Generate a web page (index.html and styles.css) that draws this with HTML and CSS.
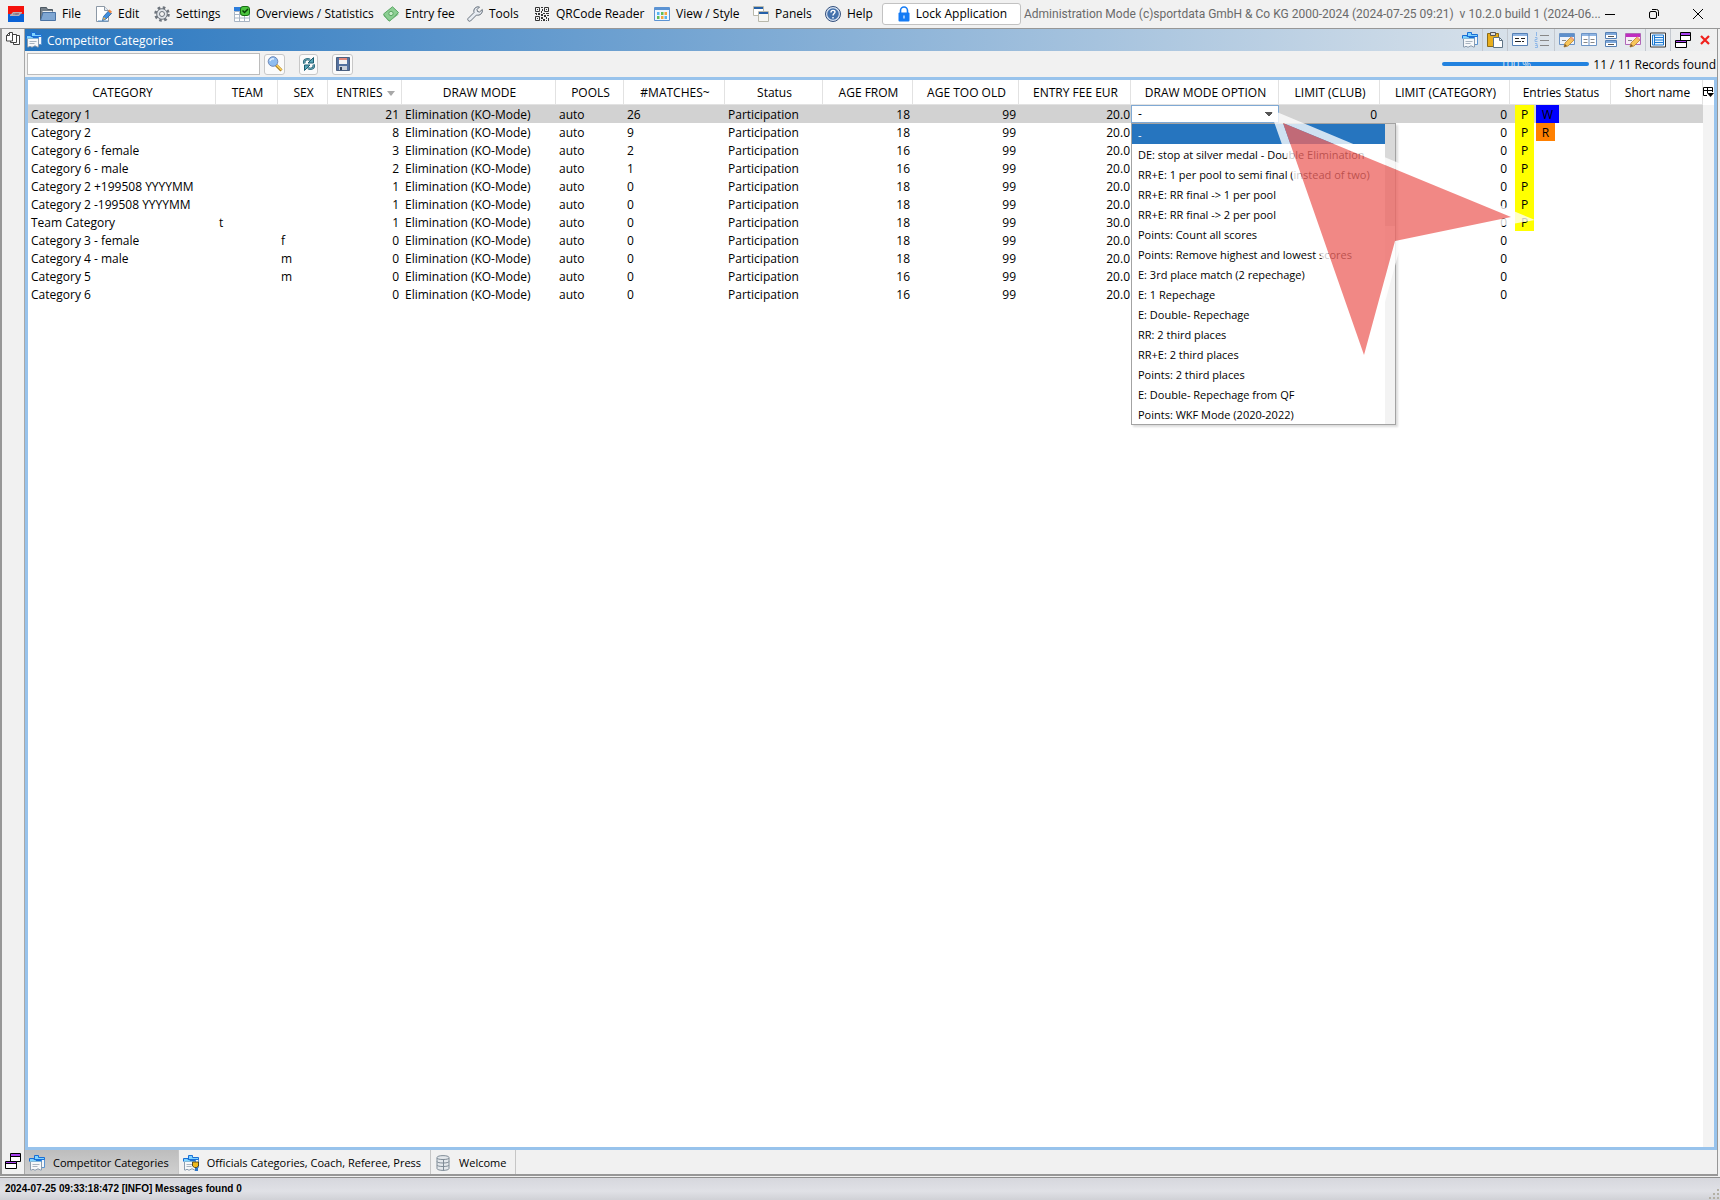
FILE: index.html
```html
<!DOCTYPE html>
<html lang="en">
<head>
<meta charset="utf-8">
<title>Competitor Categories</title>
<link rel="stylesheet" href="styles.css">
</head>
<body>
<svg class="sprite" aria-hidden="true">
  <symbol id="i-cards" viewBox="0 0 16 16"><path d="M5.500 3.500h10v9h-10z" fill="#f3f7fb" stroke="#5b93cf"/><path d="M5.500.5h4v2h6v2h-10z" fill="#7fd4ff" stroke="#1a6fd6"/><path d="M1.500 6.500h11V15H11l-1-1H8l-1 1H5l-1-1-1 1H1.500z" fill="#f6f8fa" stroke="#8b9cae"/><path d="M.5 6.500v-3H5v1h2v1h5.500v1" fill="#7fd4ff" stroke="#1a6fd6"/><path d="M3.500 9.500h7m-7 2h5" stroke="#a9b4c0"/></symbol>
  <symbol id="i-windows" viewBox="0 0 16 16"><path d="M5.500.5h10v8h-10z" fill="#fff" stroke="#000"/><path d="M6 1h9v2H6z" fill="#a63ff0"/><path d="M6 3.500h9" stroke="#000"/><path d="M.5 8.500h11v7H.5z" fill="#fff" stroke="#000"/><path d="M1 9h10v1H1z" fill="#a63ff0"/><path d="M1 10.500h10" stroke="#000"/></symbol>
  <symbol id="i-pencil" viewBox="0 0 16 16"><path d="M5 15l1-4 6-6 3 3-6 6z" fill="#f7c65a" stroke="#b9812c" stroke-width=".8"/><path d="M5 15l1-3 2 2z" fill="#7a5a30"/><path d="M11 6l1.500-1.500 2.500 2.500L13.500 8.500z" fill="#f2a27c"/></symbol>
</svg>

<header class="menubar">
  <svg class="logo" viewBox="0 0 16 16"><path fill="#f5120c" d="M0 0h16v8H0z"/><path fill="#0a62d6" d="M0 8h16v8H0z"/><path d="M2 9.500L5 6h9v1.500H7.500L7 9zM14 6.500L11 10H2V8.500h7z" fill="#b9aeb6"/><path d="M5 8h6" stroke="#777c88"/></svg>
  <nav class="menus" aria-label="Main menu">
    <button class="menu"><svg class="icon" viewBox="0 0 16 16"><path d="M.5 14V1.500h6l1 2h5V6" fill="#75808a" stroke="#4d5963"/><path d="M2.500 5.500h10" stroke="#e9edf0"/><path d="M.5 14.500L3 6.500h12.500v8z" fill="#7fa6d2" stroke="#4a73a4"/></svg>File</button>
    <button class="menu"><svg class="icon" viewBox="0 0 16 16"><path d="M.5.5h8l4 4v11H.5z" fill="#fff" stroke="#8d99a6"/><path d="M8.500.5v4h4" fill="#e3e9f0" stroke="#8d99a6"/><path d="M2 15h10" stroke="#5b93c9"/><path d="M6.500 14.500l1-4 5-5.500 3 2.500-5.500 5.500z" fill="#3f8fe0" stroke="#2b5f99" stroke-width=".8"/><path d="M7 14l.8-3 2 1.800z" fill="#f6b84c"/><path d="M12 5l1.500-1.500 2.500 2.300L14.500 7.500z" fill="#ef8640"/></svg>Edit</button>
    <button class="menu"><svg class="icon" viewBox="0 0 16 16"><circle cx="8" cy="8" r="6.500" fill="none" stroke="#6d747c" stroke-width="2.600" stroke-dasharray="2.600 2.500"/><circle cx="8" cy="8" r="5.300" fill="#dfe3e8" stroke="#6d747c"/><circle cx="8" cy="8" r="2.500" fill="#f2f2f2" stroke="#6d747c"/></svg>Settings</button>
    <button class="menu"><svg class="icon" viewBox="0 0 16 16"><path d="M0 1h8v4H0z" fill="#2b7ddc"/><path d="M.5 5.500h15v10H.5z" fill="#fff" stroke="#a8b5c4"/><path d="M1 8.500h14M1 12h14M5.500 5v10M10.500 5v10" stroke="#a8b5c4"/><rect x="6.500" y=".5" width="9" height="9" rx="2.500" fill="#4cc43e" stroke="#176e12"/><path d="M8.500 4.500l2 2 3.500-3.500" fill="none" stroke="#083f06" stroke-width="1.500"/></svg>Overviews / Statistics</button>
    <button class="menu"><svg class="icon" viewBox="0 0 16 16"><path d="M.5 8L9.500.8 15.500 6.500 7 14.800l-2-.5z" fill="#8ccf93" stroke="#5ba564"/><path d="M.5 9.500l6 5.500L15.500 8" fill="none" stroke="#6eb577"/><circle cx="8" cy="7.500" r="2.200" fill="#c9ecca" stroke="#5ba564"/></svg>Entry fee</button>
    <button class="menu"><svg class="icon" viewBox="0 0 16 16"><path d="M1 12.500l6-6C6 3 9 0 12.500 1L10 3.500l.5 2 2 .5L15.300 3.500C16 7 13 10 9.500 9l-6 6c-1.500 1-3.500-1-2.500-2.500z" fill="#e8ecf2" stroke="#66707c"/></svg>Tools</button>
    <button class="menu"><svg class="icon" viewBox="0 0 16 16"><g fill="none" stroke="#333"><path d="M1.500 1.500h4v4h-4zM10.500 1.500h4v4h-4zM1.500 10.500h4v4h-4z"/></g><path d="M3 3h1v1H3zM12 3h1v1h-1zM3 12h1v1H3zM7 1h2v1H7zM8 3h1v2H8zM7 5h1v2H7zM1 7h2v1H1zM4 7h2v2H4zM9 7h2v1H9zM12 7h3v1h-3zM2 8h1v1H2zM7 8h2v2H7zM10 9h2v2h-2zM13 9h2v1h-2zM7 11h2v2H7zM12 11h1v2h-1zM14 12h1v3h-1zM9 13h2v2H9zM7 14h1v1H7zM12 14h1v1h-1z" fill="#333"/></svg>QRCode Reader</button>
    <button class="menu"><svg class="icon" viewBox="0 0 16 16"><path d="M.5 1.500h15v13H.5z" fill="#eef6ff" stroke="#5b93d3"/><path d="M1 2h14v2H1z" fill="#5b93d3"/><path d="M3 6h2.500v3H3zM10.500 10h2.500v3h-2.500z" fill="#57b5ef"/><path d="M7 6h2.500v3H7zM3 10h2.500v3H3z" fill="#64bd55"/><path d="M10.500 6H13v3h-2.500zM7 10h2.500v3H7z" fill="#f4a540"/></svg>View / Style</button>
    <button class="menu"><svg class="icon" viewBox="0 0 16 16"><path d="M.5.5h10v9H.5z" fill="#fff" stroke="#b9b9ac"/><path d="M1 1h9v2H1z" fill="#2460a8"/><path d="M5.500 5.500h10v10h-10z" fill="#f6f6f2" stroke="#b9b9ac"/><path d="M6 6h9v2H6z" fill="#2460a8"/></svg>Panels</button>
    <button class="menu"><svg class="icon" viewBox="0 0 16 16"><circle cx="8" cy="8" r="7.500" fill="#d7e2f2" stroke="#33507d"/><circle cx="8" cy="8" r="5.800" fill="#4472ad"/><path d="M6 6.500c0-3 4-2.500 4-.5C10 7.500 8 7.500 8 9.500M8 11v1.500" fill="none" stroke="#fff" stroke-width="1.400"/></svg>Help</button>
  </nav>
  <button class="lock"><svg class="icon" viewBox="0 0 16 16"><path d="M4.500 7V4.500a3.500 3.500 0 0 1 7 0V7" fill="none" stroke="#147bf5" stroke-width="1.600"/><rect x="2.500" y="6.500" width="11" height="9" rx="1" fill="#147bf5"/><path d="M8 9.500v3" stroke="#cfe4ff" stroke-width="1.400"/></svg>Lock Application</button>
  <span class="about">Administration Mode (c)sportdata GmbH &amp; Co KG 2000-2024 (2024-07-25 09:21)&nbsp; v 10.2.0 build 1 (2024-06...</span>
  <div class="window-buttons">
    <button aria-label="Minimize"><svg viewBox="0 0 12 12"><path d="M1 6.500h10"/></svg></button>
    <button aria-label="Restore"><svg viewBox="0 0 12 12"><rect x="1.500" y="3.500" width="7" height="7" rx="1.500"/><path d="M4 1.500h4.500a2 2 0 0 1 2 2V8"/></svg></button>
    <button aria-label="Close"><svg viewBox="0 0 12 12"><path d="M1 1l10 10M11 1L1 11"/></svg></button>
  </div>
</header>

<main class="workspace">
  <aside class="gutter">
    <button aria-label="Documents"><svg class="icon" viewBox="0 0 16 16"><g fill="#fff" stroke="#444"><path d="M8.500 4.500h6v9h-6z"/><path d="M5.500 3.500h6v8h-6z"/><path d="M1.500 4.500l3-3h3v8.500h-6z"/><path d="M4.500 1.500v3h-3" fill="none"/></g></svg></button>
    <button aria-label="Windows"><svg class="icon"><use href="#i-windows"/></svg></button>
  </aside>

  <section class="pane">
    <div class="titlebar">
      <svg class="icon"><use href="#i-cards"/></svg>
      <h1>Competitor Categories</h1>
      <div class="tools">
        <span class="group"><button aria-label="Categories"><svg class="icon"><use href="#i-cards"/></svg></button></span>
        <span class="group"><button aria-label="Paste"><svg class="icon" viewBox="0 0 16 16"><path d="M.5 1.500h11v13H.5z" fill="#e8ae1c" stroke="#8a6a1a"/><path d="M3.500.5h5v3h-5z" fill="#ddd" stroke="#555"/><path d="M6.500 5.500h6l3 3v7h-9z" fill="#fff" stroke="#5e7486"/><path d="M12.500 5.500v3h3" fill="none" stroke="#5e7486"/></svg></button></span>
        <span class="group"><button aria-label="Form"><svg class="icon" viewBox="0 0 16 16"><path d="M.5 1.500h15v12H.5z" fill="#fff" stroke="#5580b5"/><path d="M1 2h14v2H1z" fill="#8fb5e3"/><path d="M3 6.500h4M9 6.500h4M3 9.500h6M10 9.500h2" stroke="#222"/></svg></button><button aria-label="Numbering"><svg class="icon" viewBox="0 0 16 16"><path d="M6 3.500h9M6 8.500h9M6 13.500h9" stroke="#888"/><path d="M2.500 0v4M1 5.500h2v2H1v2h2.500M1 11.500h2v2H1.500h2v2H1" fill="none" stroke="#8fb8e8"/></svg></button></span>
        <span class="group"><button aria-label="Edit view"><svg class="icon" viewBox="0 0 16 16"><path d="M.5 1.500h15v11H.5z" fill="#eef3fa" stroke="#6c94c6"/><path d="M1 2h14v3H1z" fill="#5d8fcb"/><path d="M3 8.500h4" stroke="#888"/><use href="#i-pencil" width="16" height="16"/></svg></button><button aria-label="Columns"><svg class="icon" viewBox="0 0 16 16"><path d="M.5 1.500h15v12H.5z" fill="#fff" stroke="#6c94c6"/><path d="M1 2h14v2H1z" fill="#8fb5e3"/><path d="M8 2v12" stroke="#6c94c6"/><path d="M2.500 7.500h4M9.500 7.500h4M2.500 10.500h4M9.500 10.500h4" stroke="#888"/></svg></button><button aria-label="Rows"><svg class="icon" viewBox="0 0 16 16"><path d="M2.500.5h11v6h-11zM2.500 8.500h11v6h-11z" fill="#fff" stroke="#5580b5"/><path d="M3 1h10v2H3zM3 9h10v2H3z" fill="#7ea8da"/><path d="M5 4.500h6M5 12.500h6" stroke="#555"/></svg></button><button aria-label="Edit style"><svg class="icon" viewBox="0 0 16 16"><path d="M.5 1.500h15v11H.5z" fill="#f7ecf7" stroke="#b067b8"/><path d="M1 2h14v3H1z" fill="#c02cc0"/><path d="M3 8.500h4" stroke="#888"/><use href="#i-pencil" width="16" height="16"/></svg></button></span>
        <span class="group"><button aria-label="Table"><svg class="icon" viewBox="0 0 16 16"><path d="M.5 1h15v14H.5z" fill="#fff" stroke="#333"/><path d="M2.500 3h11v10h-11z" fill="#e4f3ff" stroke="#1b78d2"/><path d="M5 5.500h8M5 8h8M5 10.500h8" stroke="#1b78d2"/><path d="M4.500 3v10" stroke="#1b78d2"/></svg></button></span>
        <span class="group"><button aria-label="Float window"><svg class="icon"><use href="#i-windows"/></svg></button><button aria-label="Close panel"><svg class="icon" viewBox="0 0 16 16"><path d="M4 4l8 8M12 4l-8 8" stroke="#f0201c" stroke-width="2.200"/></svg></button></span>
      </div>
    </div>

    <div class="searchbar">
      <input class="query" type="text" aria-label="Search">
      <button class="tool" aria-label="Find"><svg class="icon" viewBox="0 0 16 16"><path d="M9 9l5.500 5.500" stroke="#a97b1c" stroke-width="3"/><path d="M9.500 9l5 5" stroke="#ffd75e" stroke-width="1.400"/><circle cx="6" cy="5.500" r="4.800" fill="#8fbdf0" stroke="#6f89b8"/><path d="M3 5a3 3 0 0 1 4-2" fill="none" stroke="#e3f1ff" stroke-width="1.500"/></svg></button>
      <button class="tool narrow" aria-label="Refresh"><svg class="icon" viewBox="0 0 16 16"><path d="M3.500 7.500C2 4 6 2 9 4M12.500 8.500C14 12 10 14 7 12" fill="none" stroke="#1c5c70" stroke-width="2.400"/><path d="M3.500 7.500C2 4 6 2 9 4M12.500 8.500C14 12 10 14 7 12" fill="none" stroke="#8cc6d4" stroke-width=".8"/><path d="M7 7h5.500V1.500zM9 9H3.500v5.500z" fill="#58a6b8" stroke="#1c5c70"/></svg></button>
      <button class="tool" aria-label="Save"><svg class="icon" viewBox="0 0 16 16"><path d="M1.500 1.500h13v13h-13z" fill="#55729f" stroke="#4a5f80"/><path d="M4 2h8v6H4z" fill="#f4f4f4"/><path d="M4 2h8v2H4z" fill="#e0877c"/><path d="M4 10h8v4H4z" fill="#c9d0da"/><path d="M5 11h2v3H5z" fill="#33445e"/></svg></button>
      <div class="progress" role="progressbar" aria-label="Loaded" aria-valuenow="100"><span>100 %</span></div>
      <output class="count">11 / 11 Records found</output>
    </div>

    <div class="grid">
      <table>
        <colgroup><col class="w-category"><col class="w-team"><col class="w-sex"><col class="w-entries"><col class="w-mode"><col class="w-pools"><col class="w-matches"><col class="w-status"><col class="w-from"><col class="w-old"><col class="w-fee"><col class="w-option"><col class="w-club"><col class="w-limit"><col class="w-tags"><col></colgroup>
        <thead><tr><th>CATEGORY</th><th>TEAM</th><th>SEX</th><th>ENTRIES <i class="sort"></i></th><th>DRAW MODE</th><th>POOLS</th><th>#MATCHES~</th><th>Status</th><th>AGE FROM</th><th>AGE TOO OLD</th><th>ENTRY FEE EUR</th><th>DRAW MODE OPTION</th><th>LIMIT (CLUB)</th><th>LIMIT (CATEGORY)</th><th>Entries Status</th><th>Short name</th></tr></thead>
        <tbody>
          <tr class="selected"><td>Category 1</td><td></td><td></td><td class="num">21</td><td>Elimination (KO-Mode)</td><td>auto</td><td>26</td><td>Participation</td><td class="num">18</td><td class="num">99</td><td class="fee">20.0</td>
            <td class="editor">
              <select aria-label="Draw mode option"><option>-</option></select>
              <ul class="options" role="listbox" aria-label="Draw mode options">
                <li role="option" aria-selected="true">-</li>
                <li role="option">DE: stop at silver medal - Double Elimination</li>
                <li role="option">RR+E: 1 per pool to semi final (instead of two)</li>
                <li role="option">RR+E: RR final -&gt; 1 per pool</li>
                <li role="option">RR+E: RR final -&gt; 2 per pool</li>
                <li role="option">Points: Count all scores</li>
                <li role="option">Points: Remove highest and lowest scores</li>
                <li role="option">E: 3rd place match (2 repechage)</li>
                <li role="option">E: 1 Repechage</li>
                <li role="option">E: Double- Repechage</li>
                <li role="option">RR: 2 third places</li>
                <li role="option">RR+E: 2 third places</li>
                <li role="option">Points: 2 third places</li>
                <li role="option">E: Double- Repechage from QF</li>
                <li role="option">Points: WKF Mode (2020-2022)</li>
              </ul>
              <svg class="pointer" viewBox="0 0 264 270" aria-hidden="true"><path fill="#fff" fill-opacity=".78" fill-rule="evenodd" d="M0 0L263 110 129 134 92 269 0 6zM11 13L92 245 123 131 239 107z"/><path fill="#ed6763" fill-opacity=".78" d="M11 13L239 107 123 131 92 245z"/></svg>
            </td>
            <td class="num">0</td><td class="num">0</td><td class="tags"><b class="tag p">P</b><b class="tag w">W</b></td><td></td></tr>
          <tr><td>Category 2</td><td></td><td></td><td class="num">8</td><td>Elimination (KO-Mode)</td><td>auto</td><td>9</td><td>Participation</td><td class="num">18</td><td class="num">99</td><td class="fee">20.0</td><td></td><td></td><td class="num">0</td><td class="tags"><b class="tag p">P</b><b class="tag r">R</b></td><td></td></tr>
          <tr><td>Category 6 - female</td><td></td><td></td><td class="num">3</td><td>Elimination (KO-Mode)</td><td>auto</td><td>2</td><td>Participation</td><td class="num">16</td><td class="num">99</td><td class="fee">20.0</td><td></td><td></td><td class="num">0</td><td class="tags"><b class="tag p">P</b></td><td></td></tr>
          <tr><td>Category 6 - male</td><td></td><td></td><td class="num">2</td><td>Elimination (KO-Mode)</td><td>auto</td><td>1</td><td>Participation</td><td class="num">16</td><td class="num">99</td><td class="fee">20.0</td><td></td><td></td><td class="num">0</td><td class="tags"><b class="tag p">P</b></td><td></td></tr>
          <tr><td>Category 2 +199508 YYYYMM</td><td></td><td></td><td class="num">1</td><td>Elimination (KO-Mode)</td><td>auto</td><td>0</td><td>Participation</td><td class="num">18</td><td class="num">99</td><td class="fee">20.0</td><td></td><td></td><td class="num">0</td><td class="tags"><b class="tag p">P</b></td><td></td></tr>
          <tr><td>Category 2 -199508 YYYYMM</td><td></td><td></td><td class="num">1</td><td>Elimination (KO-Mode)</td><td>auto</td><td>0</td><td>Participation</td><td class="num">18</td><td class="num">99</td><td class="fee">20.0</td><td></td><td></td><td class="num">0</td><td class="tags"><b class="tag p">P</b></td><td></td></tr>
          <tr><td>Team Category</td><td>t</td><td></td><td class="num">1</td><td>Elimination (KO-Mode)</td><td>auto</td><td>0</td><td>Participation</td><td class="num">18</td><td class="num">99</td><td class="fee">30.0</td><td></td><td></td><td class="num">0</td><td class="tags"><b class="tag p">P</b></td><td></td></tr>
          <tr><td>Category 3 - female</td><td></td><td>f</td><td class="num">0</td><td>Elimination (KO-Mode)</td><td>auto</td><td>0</td><td>Participation</td><td class="num">18</td><td class="num">99</td><td class="fee">20.0</td><td></td><td></td><td class="num">0</td><td></td><td></td></tr>
          <tr><td>Category 4 - male</td><td></td><td>m</td><td class="num">0</td><td>Elimination (KO-Mode)</td><td>auto</td><td>0</td><td>Participation</td><td class="num">18</td><td class="num">99</td><td class="fee">20.0</td><td></td><td></td><td class="num">0</td><td></td><td></td></tr>
          <tr><td>Category 5</td><td></td><td>m</td><td class="num">0</td><td>Elimination (KO-Mode)</td><td>auto</td><td>0</td><td>Participation</td><td class="num">16</td><td class="num">99</td><td class="fee">20.0</td><td></td><td></td><td class="num">0</td><td></td><td></td></tr>
          <tr><td>Category 6</td><td></td><td></td><td class="num">0</td><td>Elimination (KO-Mode)</td><td>auto</td><td>0</td><td>Participation</td><td class="num">16</td><td class="num">99</td><td class="fee">20.0</td><td></td><td></td><td class="num">0</td><td></td><td></td></tr>
        </tbody>
      </table>
      <div class="rail"><button aria-label="Choose columns"><svg viewBox="0 0 11 11"><path d="M4 8.500H.5v-8h9V5M.5 3.500h9M4.500.5V6" fill="none" stroke="#000"/><path d="M4 6h7L7.500 10z"/></svg></button></div>
    </div>

    <nav class="tabs" aria-label="Open panels">
      <button class="tab current"><svg class="icon"><use href="#i-cards"/></svg>Competitor Categories</button>
      <button class="tab"><svg class="icon" viewBox="0 0 16 16"><use href="#i-cards" width="16" height="16"/><path d="M9.500 7h6v4l-2 1.500h-2l-2-1.500z" fill="#f0b91c" stroke="#3c3010" stroke-width=".8"/><path d="M12 13h3v3h-3z" fill="#2a74c8"/></svg>Officials Categories, Coach, Referee, Press</button>
      <button class="tab"><svg class="icon" viewBox="0 0 16 16"><path d="M2 2.500C2 0 14 0 14 2.500v11c0 2.500-12 2.500-12 0z" fill="#e4e8ec" stroke="#7f8b96"/><path d="M2 3c0 2 12 2 12 0M2 6.500c0 2 12 2 12 0M2 10c0 2 12 2 12 0M8.500 4.500v11" fill="none" stroke="#7f8b96"/></svg>Welcome</button>
    </nav>
  </section>
</main>

<footer class="statusbar">
  <span>2024-07-25 09:33:18:472 [INFO] Messages found 0</span>
  <svg class="grip" viewBox="0 0 12 12"><path d="M9 1h2v2H9zM5 5h2v2H5zM9 5h2v2H9zM1 9h2v2H1zM5 9h2v2H5zM9 9h2v2H9z" fill="#b3b0a4"/></svg>
</footer>
</body>
</html>
```
FILE: styles.css
```css
* { box-sizing: border-box; }

html, body { height: 100%; }

body {
  margin: 0;
  display: flex;
  flex-direction: column;
  background: #f1f1f1;
  color: #000;
  font: 12px/18px "Open Sans", "Noto Sans", sans-serif;
  overflow: hidden;
}

button {
  margin: 0;
  padding: 0;
  border: 0;
  background: none;
  color: inherit;
  font: inherit;
  white-space: nowrap;
}

.sprite { display: none; }
.icon { width: 16px; height: 16px; flex: none; display: block; }

/* Menu bar */
.menubar {
  display: flex;
  align-items: center;
  height: 29px;
  flex: none;
  padding: 0 8px;
  border-bottom: 1px solid #979797;
}
.logo { width: 16px; height: 16px; flex: none; margin-right: 16px; }
.menus {
  display: grid;
  grid-template-columns: 56px 58px 80px 149px 84px 67px 120px 99px 72px 57px;
  flex: none;
}
.menu { display: flex; align-items: center; gap: 6px; }
.lock {
  display: flex;
  align-items: center;
  justify-content: center;
  gap: 4px;
  width: 139px;
  height: 22px;
  flex: none;
  border: 1px solid #c2c2c2;
  border-radius: 3px;
  background: #fff;
}
.about {
  flex: 1;
  min-width: 0;
  padding-left: 3px;
  white-space: nowrap;
  color: #6a6a6a;
  font-family: Roboto, "Open Sans", sans-serif;
}
.window-buttons { display: flex; gap: 32px; padding-right: 8px; }
.window-buttons svg { display: block; width: 12px; height: 12px; fill: none; stroke: #000; }

/* Workspace */
.workspace {
  display: flex;
  flex: 1;
  min-height: 0;
  border: solid #979797;
  border-width: 0 1px 2px 2px;
  margin-right: 2px;
}
.gutter {
  display: flex;
  flex-direction: column;
  justify-content: space-between;
  width: 23px;
  flex: none;
  padding: 2px 3px 5px;
  border-right: 1px solid #a8a8a8;
}
.pane { display: flex; flex-direction: column; flex: 1; min-width: 0; }

.titlebar {
  display: flex;
  align-items: center;
  height: 22px;
  flex: none;
  padding-left: 1px;
  background: linear-gradient(90deg, #2675bf, #f0f0f0);
}
.titlebar h1 {
  flex: 1;
  margin: 0;
  padding: 2px 0 0 5px;
  color: #fff;
  font-size: 12px;
  font-weight: 400;
}
.tools { display: flex; height: 100%; }
.group {
  display: flex;
  align-items: center;
  gap: 6px;
  padding: 0 4px;
  border-left: 1px solid #c3c8cf;
}
.group:first-child { border-left: 0; }

.searchbar {
  display: flex;
  align-items: center;
  height: 26px;
  flex: none;
  padding: 0 1px 0 2px;
}
.query {
  width: 233px;
  height: 22px;
  border: 1px solid #bcbcbc;
  background: #fff;
  font: inherit;
}
.tool {
  display: grid;
  place-items: center;
  width: 21px;
  height: 21px;
  margin-left: 14px;
  border: 1px solid #c8c8c8;
  border-radius: 3px;
  background: #fbfbfb;
}
.query + .tool { margin-left: 4px; }
.narrow { width: 19px; }
.progress {
  height: 4px;
  width: 147px;
  margin-left: auto;
  border-radius: 2px;
  overflow: hidden;
  background: #2282df;
  color: #d9e4f2;
  font-size: 11px;
  line-height: 4px;
  text-align: center;
}
.progress span { display: block; }
.count { margin-left: 4px; padding-top: 2px; white-space: nowrap; }

/* Records */
.grid {
  display: flex;
  flex: 1;
  min-height: 0;
  border: 3px solid #98c3ec;
  background: #fff;
}
table {
  flex: 1;
  align-self: flex-start;
  width: 100%;
  min-width: 0;
  table-layout: fixed;
  border-collapse: separate;
  border-spacing: 0;
}
th {
  height: 25px;
  padding: 2px 0 0 2px;
  border: solid #e2e2e2;
  border-width: 0 1px 1px 0;
  font-weight: 400;
  white-space: nowrap;
}
td { height: 18px; padding: 2px 3px 0; line-height: 16px; white-space: nowrap; }
.num { padding-right: 3px; text-align: right; }
.fee { padding-right: 1px; text-align: right; }
.selected td { background: #d2d2d2; }
.sort {
  display: inline-block;
  margin-left: 1px;
  border: 4px solid transparent;
  border-top: 5px solid #a8a8a8;
  border-bottom: 0;
  vertical-align: middle;
}

.w-category { width: 188px; }
.w-team { width: 62px; }
.w-sex { width: 50px; }
.w-entries { width: 74px; }
.w-mode { width: 154px; }
.w-pools { width: 68px; }
.w-matches { width: 101px; }
.w-status { width: 98px; }
.w-from { width: 90px; }
.w-old { width: 106px; }
.w-fee { width: 112px; }
.w-option { width: 148px; }
.w-club { width: 101px; }
.w-limit { width: 130px; }
.w-tags { width: 101px; }

.tags { padding: 0 5px; font-size: 0; }
.tag {
  display: inline-block;
  width: 19px;
  height: 18px;
  padding-top: 2px;
  margin-right: 2px;
  font-size: 12px;
  font-weight: 400;
  text-align: center;
  vertical-align: top;
}
.p { background: #ff0; }
.w { width: 23px; background: #00f; }
.r { background: #ff8000; }

.rail { width: 11px; flex: none; margin-top: 25px; background: #f3f3f3; }
.rail button { display: block; height: 11px; margin-top: -18px; }
.rail svg { display: block; width: 11px; height: 11px; }

/* Draw mode option editor */
.selected .editor { position: relative; padding: 0; background: none; }
.editor select {
  display: block;
  width: 100%;
  height: 18px;
  padding: 0 6px;
  border: 1px solid #7fa9d4;
  border-radius: 0;
  appearance: none;
  background:
    linear-gradient(to bottom right, #555 50%, transparent 50%) right 5px center / 4px 5px no-repeat,
    linear-gradient(to bottom left, #555 50%, transparent 50%) right 9px center / 4px 5px no-repeat,
    #fff;
  color: #000;
  font: inherit;
  line-height: 16px;
}
.options {
  position: absolute;
  z-index: 1;
  top: 18px;
  left: 0;
  width: 265px;
  margin: 0;
  padding: 0 10px 0 0;
  border: 1px solid #a3a3a3;
  list-style: none;
  font-size: 11px;
  background:
    linear-gradient(#d9d9d9, #d9d9d9) right top / 10px 102px no-repeat,
    linear-gradient(#f3f3f3, #f3f3f3) right top / 10px 100% no-repeat,
    #fff;
  box-shadow: 2px 2px 2px rgba(0, 0, 0, .14);
}
.options li { height: 20px; padding: 1px 6px 0; line-height: 20px; }
.options [aria-selected] { background: #2675bf; color: #fff; }
.pointer {
  position: absolute;
  z-index: 2;
  top: 5px;
  left: 141px;
  width: 264px;
  height: 270px;
}

/* Panel tabs */
.tabs { display: flex; height: 24px; flex: none; font-size: 11px; }
.tab {
  display: flex;
  align-items: center;
  gap: 8px;
  padding: 2px 9px 0 4px;
  border-right: 1px solid #c6c6c6;
}
.current { background: linear-gradient(#bdbdbd, #d0d0d0); }

/* Status bar */
.statusbar {
  display: flex;
  align-items: center;
  justify-content: space-between;
  height: 23px;
  flex: none;
  margin-top: 1px;
  padding-left: 5px;
  border-top: 1px solid #8e8e8e;
  background: linear-gradient(#d6d7dd, #e0e1e6 60%, #d0d1d6);
  font: bold 10px/20px "Liberation Sans", Arial, sans-serif;
}
.grip { width: 12px; height: 12px; align-self: flex-end; }
```
